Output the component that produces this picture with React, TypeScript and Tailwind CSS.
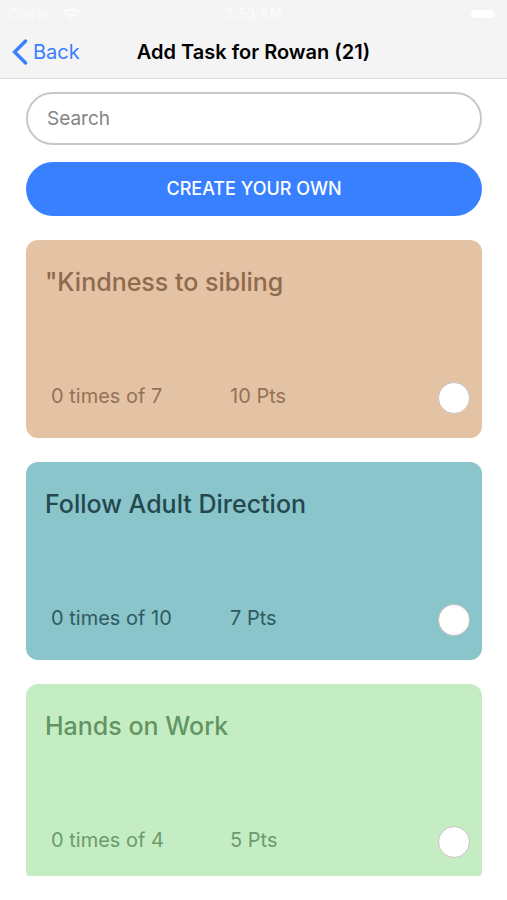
import React from 'react';

type Task = {
  id: string;
  title: string;
  done: number;
  total: number;
  points: number;
  card: string;
  heading: string;
  meta: string;
};

const tasks: Task[] = [
  {
    id: 'kindness',
    title: '"Kindness to sibling',
    done: 0,
    total: 7,
    points: 10,
    card: 'bg-[#e4c2a4]',
    heading: 'text-[#8f6a4c]',
    meta: 'text-[#957257]',
  },
  {
    id: 'direction',
    title: 'Follow Adult Direction',
    done: 0,
    total: 10,
    points: 7,
    card: 'bg-[#89c5cb]',
    heading: 'text-[#24484e]',
    meta: 'text-[#305a60]',
  },
  {
    id: 'hands-on',
    title: 'Hands on Work',
    done: 0,
    total: 4,
    points: 5,
    card: 'bg-[#c5edc4]',
    heading: 'text-[#629562]',
    meta: 'text-[#6b9b6b]',
  },
];

const StatusBar: React.FC = () => {
  return (
    <div className="grid h-7 grid-cols-3 items-center px-2 text-sm text-[#fbfbfb]">
      <div className="flex items-center gap-2">
        <span>Carrier</span>
        <svg width="18" height="13" viewBox="0 0 18 13" fill="none" stroke="currentColor" strokeWidth="2.6" aria-hidden="true">
          <path d="M1 4.6C5.6 0.4 12.4 0.4 17 4.6" />
          <path d="M4.2 8C7 5.6 11 5.6 13.8 8" />
          <path d="M6.6 10L9 12.6L11.4 10C10 8.8 8 8.8 6.6 10Z" fill="currentColor" stroke="none" />
        </svg>
      </div>
      <span className="text-center font-medium">3:53 AM</span>
      <span className="mr-1 h-2 w-6 justify-self-end rounded-sm bg-white" />
    </div>
  );
};

const Header: React.FC = () => {
  return (
    <header className="shrink-0 border-b border-[#dcdcdc] bg-[#f4f4f4]">
      <StatusBar />
      <div className="grid h-[50px] grid-cols-[1fr_auto_1fr] items-center px-3 pb-[2px]">
        <button type="button" className="flex items-center gap-[5px] justify-self-start text-xl text-[#3880ff]">
          <svg width="16" height="26" viewBox="0 0 16 26" fill="none" stroke="currentColor" strokeWidth="3.4" strokeLinecap="round" aria-hidden="true">
            <path d="M13.6 2L2.6 13L13.6 24" />
          </svg>
          Back
        </button>
        <h1 className="text-xl font-semibold text-black">Add Task for Rowan (21)</h1>
      </div>
    </header>
  );
};

const TaskCard: React.FC<{ task: Task }> = ({ task }) => {
  return (
    <li className={`flex h-[198px] shrink-0 flex-col justify-between rounded-xl pt-6 pr-3 pb-6 pl-[19px] ${task.card}`}>
      <h2 className={`text-[25px] leading-9 font-medium ${task.heading}`}>
        <label htmlFor={task.id}>{task.title}</label>
      </h2>
      <div className={`grid grid-cols-[179px_1fr_auto] items-start pl-[6px] text-xl leading-7 ${task.meta}`}>
        <span>{task.done} times of {task.total}</span>
        <span>{task.points} Pts</span>
        <input
          id={task.id}
          type="checkbox"
          className="size-8 appearance-none rounded-full border border-[#c8c4c0] bg-white checked:bg-[#3880ff]"
        />
      </div>
    </li>
  );
};

const App: React.FC = () => {
  return (
    <div className="flex h-screen flex-col bg-white pb-6 font-['Inter',sans-serif]">
      <Header />
      <main className="flex min-h-0 flex-1 flex-col overflow-hidden pt-[13px] pr-[25px] pl-[26px]">
        <input
          type="search"
          aria-label="Search"
          placeholder="Search"
          className="h-[53px] w-full shrink-0 rounded-full border-2 border-[#c8c8c8] px-[19px] text-[19px] text-black placeholder:text-[#858585]"
        />
        <button type="button" className="mt-[17px] h-[54px] w-full shrink-0 rounded-full bg-[#3880ff] text-lg font-medium text-white">
          CREATE YOUR OWN
        </button>
        <ul className="mt-6 flex flex-col gap-6">
          {tasks.map((task) => (
            <TaskCard key={task.id} task={task} />
          ))}
        </ul>
      </main>
    </div>
  );
};

export default App;
